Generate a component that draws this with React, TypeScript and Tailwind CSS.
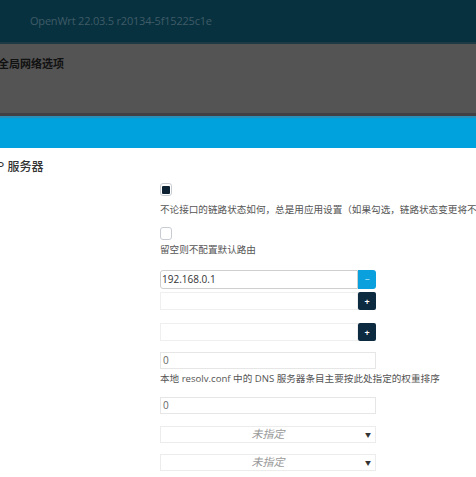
export default function App() {
  const font = { fontFamily: '"Open Sans", "Noto Sans CJK SC", sans-serif' };
  return (
    <div className="w-[476px] h-[477px] overflow-hidden bg-white" style={font}>
      {/* header */}
      <div className="h-[42px] bg-[#07313f] flex items-center pl-[30px]">
        <span className="text-[11px] text-[#3f5b67] whitespace-nowrap tracking-[-0.2px]">
          OpenWrt 22.03.5 r20134-5f15225c1e
        </span>
      </div>
      <div className="h-[2px] bg-[#1d3a45]" />
      {/* gray band */}
      <div className="h-[69px] bg-[#545454] pt-[12px]">
        <div className="text-[11px] font-bold text-[#111] whitespace-nowrap -ml-[2px]">全局网络选项</div>
      </div>
      <div className="h-[3px] bg-[#423f45]" />
      <div className="h-[2px] bg-[#2c8fb7]" />
      {/* blue bar */}
      <div className="h-[30px] bg-[#00a2de]" />

      {/* body */}
      <div className="pt-[10px]">
        <div className="text-[12px] text-[#333] whitespace-nowrap -ml-[28px] font-medium">DHCP 服务器</div>

        <div className="pl-[160px] pt-[7px] text-[9.6px] text-[#555] whitespace-nowrap">
          <div className="w-[12px] h-[13px] rounded-[3px] border border-[#c8ccd2] flex items-center justify-center">
            <div className="w-[8px] h-[8px] rounded-[1px] bg-[#0c2233]" />
          </div>
          <div className="mt-[7px] leading-[14px]">
            不论接口的链路状态如何，总是用应用设置（如果勾选，链路状态变更将不再触发热插拔事件）
          </div>

          <div className="mt-[10px] w-[12px] h-[13px] rounded-[3px] border border-[#c8ccd2]" />
          <div className="mt-[3px] leading-[14px]">留空则不配置默认路由</div>

          {/* dns list */}
          <div className="mt-[13px] w-[216px] flex flex-col">
            <div className="flex h-[19px]">
              <div className="flex-1 border border-[#cfcfcf] rounded-l-[3px] flex items-center px-[1px] text-[10px] text-[#333]">
                192.168.0.1
              </div>
              <div className="w-[18px] bg-[#0aa0de] rounded-r-[3px] flex items-center justify-center text-[#cfeefa] text-[9px] leading-none">
                −
              </div>
            </div>
            <div className="flex h-[18px] mt-[3px]">
              <div className="flex-1 border border-[#efefef]" />
              <div className="w-[18px] bg-[#0c2a40] rounded-[2px] flex items-center justify-center text-white text-[9px] font-bold leading-none">
                +
              </div>
            </div>
            <div className="flex h-[18px] mt-[13px]">
              <div className="flex-1 border border-[#efefef]" />
              <div className="w-[18px] bg-[#0c2a40] rounded-[2px] flex items-center justify-center text-white text-[9px] font-bold leading-none">
                +
              </div>
            </div>
          </div>

          <div className="mt-[11px] w-[216px] h-[17px] border border-[#e6e6e6] flex items-center px-[2px] text-[10px] text-[#666]">
            0
          </div>
          <div className="mt-[3px] leading-[14px]">本地 resolv.conf 中的 DNS 服务器条目主要按此处指定的权重排序</div>

          <div className="mt-[11px] w-[216px] h-[17px] border border-[#e6e6e6] flex items-center px-[2px] text-[10px] text-[#666]">
            0
          </div>

          <div className="mt-[12px] w-[216px] h-[17px] border border-[#ececec] relative flex items-center justify-center text-[11px] italic text-[#999]">
            未指定
            <span className="absolute right-[4px] top-[4px] text-[6px] not-italic text-[#333]">▼</span>
          </div>
          <div className="mt-[11px] w-[216px] h-[17px] border border-[#ececec] relative flex items-center justify-center text-[11px] italic text-[#999]">
            未指定
            <span className="absolute right-[4px] top-[4px] text-[6px] not-italic text-[#333]">▼</span>
          </div>
        </div>
      </div>
    </div>
  );
}
